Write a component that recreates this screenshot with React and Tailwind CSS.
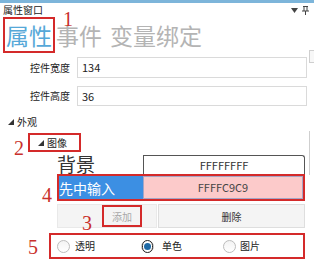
import React from "react";

const RED = "border-[#d42a2a]";

function Num({ children, className }) {
  return (
    <span
      className={`absolute text-[20px] leading-none text-[#c9302c] ${className}`}
      style={{ fontFamily: "'Liberation Serif', serif" }}
    >
      {children}
    </span>
  );
}

function Tri() {
  return (
    <svg width="6" height="6" viewBox="0 0 6 6" className="shrink-0">
      <path d="M6 0 L6 6 L0 6 Z" fill="#333" />
    </svg>
  );
}

function Radio({ checked }) {
  return (
    <span className="w-[13px] h-[13px] rounded-full border border-[#bdbdbd] bg-gradient-to-b from-[#f3f3f3] to-white flex items-center justify-center shrink-0">
      {checked && <span className="w-[13px] h-[13px] rounded-full border border-[#2b2b2b] bg-white flex items-center justify-center"><span className="w-[7px] h-[7px] rounded-full bg-[#1e6aa6]" /></span>}
    </span>
  );
}

export default function App() {
  return (
    <div
      className="relative w-[314px] h-[265px] overflow-hidden bg-white text-[#222]"
      style={{ fontFamily: "'Noto Sans CJK SC', 'Noto Sans', sans-serif" }}
    >
      {/* top bar */}
      <div className="h-[3px] bg-[#7db5da]" />

      {/* title */}
      <div className="h-[14px] flex items-center justify-between pl-[3px] pr-[5px]">
        <span className="text-[10px] leading-none">属性窗口</span>
        <div className="flex items-center gap-[4px]">
          <svg width="7" height="5" viewBox="0 0 7 5">
            <path d="M0 0 H7 L3.5 5 Z" fill="#444" />
          </svg>
          <svg width="7" height="9" viewBox="0 0 7 9">
            <path d="M1 0.5 H6 M2 0.5 V5 M5 0.5 V5 M0 5 H7 M3.5 5 V9" stroke="#444" strokeWidth="1" fill="none" />
          </svg>
        </div>
      </div>

      {/* tabs */}
      <div className="relative h-[36px] flex items-center">
        <div className={`ml-[3px] w-[52px] h-[36px] border-2 ${RED} flex items-center justify-center`}>
          <span className="text-[23px] leading-none text-[#56a8d8]">属性</span>
        </div>
        <span className="ml-[1px] text-[23px] leading-none text-[#b4b4b4]">事件</span>
        <span className="ml-[8px] text-[23px] leading-none text-[#b4b4b4]">变量绑定</span>
        <Num className="left-[63px] top-[-8px]">1</Num>
      </div>

      {/* size fields */}
      <div className="mt-[4px] h-[21px] flex items-center">
        <span className="w-[70px] text-right text-[10px] leading-none">控件宽度</span>
        <div className="ml-[7px] w-[230px] h-full border border-[#dadada] flex items-center pl-[4px] text-[11px]">134</div>
      </div>
      <div className="mt-[8px] h-[20px] flex items-center">
        <span className="w-[70px] text-right text-[10px] leading-none">控件高度</span>
        <div className="ml-[7px] w-[230px] h-full border border-[#dadada] flex items-center pl-[4px] text-[11px]">36</div>
      </div>

      {/* appearance */}
      <div className="mt-[9px] h-[14px] flex items-center pl-[8px] gap-[3px]">
        <Tri />
        <span className="text-[10px] leading-none">外观</span>
      </div>

      <div className="relative mt-[4px] h-[19px] flex">
        <div className={`ml-[28px] w-[53px] h-full border-2 ${RED} flex items-center pl-[8px] gap-[3px]`}>
          <Tri />
          <span className="text-[10px] leading-none">图像</span>
        </div>
        <Num className="left-[14px] top-[5px]">2</Num>
      </div>

      {/* background row */}
      <div className="h-[22px] flex items-center">
        <span className="ml-[57px] w-[86px] text-[19px] leading-none text-[#333]">背景</span>
        <div className="mt-[3px] w-[162px] h-[19px] border-t border-x border-[#555] rounded-tr-[3px] flex items-center justify-center text-[11px] text-[#333]">
          FFFFFFFF
        </div>
      </div>

      {/* selected input row */}
      <div className="relative h-[27px]">
        <div className={`ml-[57px] w-[248px] h-full border-2 ${RED} flex`}>
          <div className="w-[84px] bg-[#3c8fe3] flex items-center text-[14px] leading-none text-white">先中输入</div>
          <div className="flex-1 bg-[#fccaca] border border-[#a5a5c5] flex items-center justify-center text-[11px] text-[#444]">FFFFC9C9</div>
        </div>
        <Num className="left-[42px] top-[11px]">4</Num>
      </div>

      {/* buttons */}
      <div className="relative mt-[3px] h-[24px] flex ml-[57px]">
        <div className="w-[100px] h-full bg-[#f4f4f4] border border-[#e9e9e9] flex">
          <div className={`ml-[44px] w-[40px] h-full border-2 ${RED} flex items-center justify-center text-[10px] text-[#a8a8a8]`}>添加</div>
        </div>
        <div className="ml-[1px] w-[147px] h-full bg-[#f4f4f4] border border-[#dedede] flex items-center justify-center text-[10px] text-[#333]">删除</div>
        <Num className="left-[25px] top-[9px]">3</Num>
      </div>

      {/* radios */}
      <div className="relative mt-[5px] h-[26px]">
        <div className={`ml-[49px] w-[256px] h-full border-2 ${RED} flex items-center text-[10px] leading-none`}>
          <div className="ml-[6px] w-[84px] flex items-center gap-[5px]">
            <Radio />
            <span>透明</span>
          </div>
          <div className="w-[82px] flex items-center gap-[8px]">
            <Radio checked />
            <span>单色</span>
          </div>
          <div className="flex items-center gap-[4px]">
            <Radio />
            <span>图片</span>
          </div>
        </div>
        <Num className="left-[28px] top-[4px]">5</Num>
      </div>

      {/* scrollbar bits */}
      <div className="absolute left-[309px] top-[50px] w-[6px] h-[13px] border border-[#cfcfcf] bg-[#f7f7f7]" />
      <div className="absolute left-[309px] top-[131px] w-px h-[44px] bg-[#cfcfcf]" />
    </div>
  );
}
